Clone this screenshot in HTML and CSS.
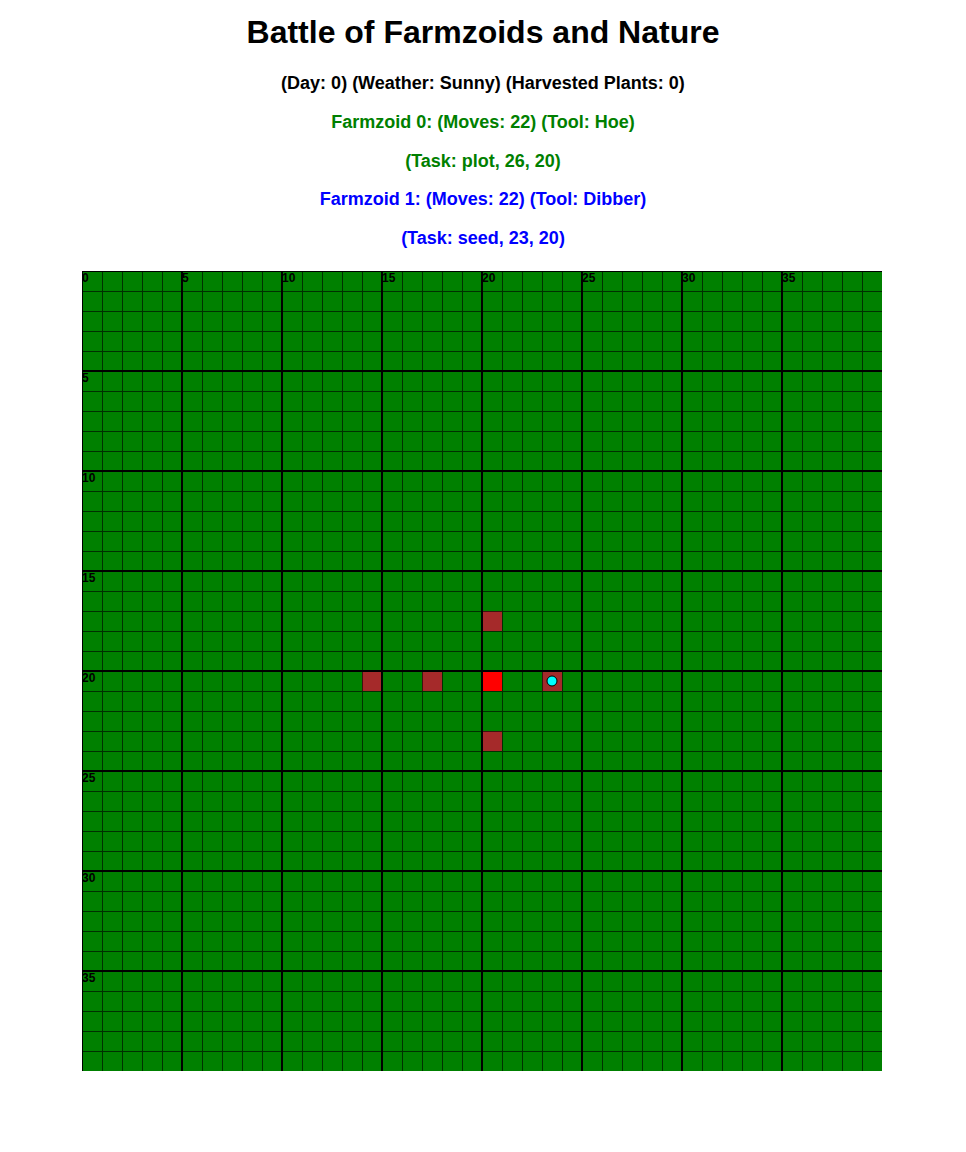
FILE: index.html
```html
<!DOCTYPE html>
<html lang="en">
<head>
<meta charset="utf-8">
<title>Battle of Farmzoids and Nature</title>
<link rel="stylesheet" href="styles.css">
</head>
<body>
<header class="status">
  <h1 class="title">Battle of Farmzoids and Nature</h1>
  <p class="line">(Day: 0) (Weather: Sunny) (Harvested Plants: 0)</p>
  <p class="line zoid-0">Farmzoid 0: (Moves: 22) (Tool: Hoe)</p>
  <p class="line zoid-0">(Task: plot, 26, 20)</p>
  <p class="line zoid-1">Farmzoid 1: (Moves: 22) (Tool: Dibber)</p>
  <p class="line zoid-1">(Task: seed, 23, 20)</p>
</header>
<div class="board-wrap">
  <svg class="board" width="800" height="800" viewBox="0 0 800 800" xmlns="http://www.w3.org/2000/svg">
    <defs>
      <pattern id="cell" width="20" height="20" patternUnits="userSpaceOnUse">
        <path d="M0 0H20V1H1V20H0Z" class="thin"/>
      </pattern>
    </defs>
    <rect class="field" x="0" y="0" width="800" height="800"/>
    <g class="plots">
      <rect class="plot" x="400" y="340" width="20" height="20"/>
      <rect class="plot" x="280" y="400" width="20" height="20"/>
      <rect class="plot" x="340" y="400" width="20" height="20"/>
      <rect class="target" x="400" y="400" width="20" height="20"/>
      <rect class="plot" x="460" y="400" width="20" height="20"/>
      <rect class="plot" x="400" y="460" width="20" height="20"/>
    </g>
    <rect x="0" y="0" width="800" height="800" fill="url(#cell)"/>
    <g class="thick">
      <rect x="0" y="0" width="1" height="800"/>
      <rect x="99" y="0" width="2" height="800"/>
      <rect x="199" y="0" width="2" height="800"/>
      <rect x="299" y="0" width="2" height="800"/>
      <rect x="399" y="0" width="2" height="800"/>
      <rect x="499" y="0" width="2" height="800"/>
      <rect x="599" y="0" width="2" height="800"/>
      <rect x="699" y="0" width="2" height="800"/>
      <rect x="0" y="0" width="800" height="1"/>
      <rect x="0" y="99" width="800" height="2"/>
      <rect x="0" y="199" width="800" height="2"/>
      <rect x="0" y="299" width="800" height="2"/>
      <rect x="0" y="399" width="800" height="2"/>
      <rect x="0" y="499" width="800" height="2"/>
      <rect x="0" y="599" width="800" height="2"/>
      <rect x="0" y="699" width="800" height="2"/>
    </g>
    <g class="labels">
      <text x="0" y="10.9">0</text>
      <text x="100" y="10.9">5</text>
      <text x="200" y="10.9">10</text>
      <text x="300" y="10.9">15</text>
      <text x="400" y="10.9">20</text>
      <text x="500" y="10.9">25</text>
      <text x="600" y="10.9">30</text>
      <text x="700" y="10.9">35</text>
      <text x="0" y="110.9">5</text>
      <text x="0" y="210.9">10</text>
      <text x="0" y="310.9">15</text>
      <text x="0" y="410.9">20</text>
      <text x="0" y="510.9">25</text>
      <text x="0" y="610.9">30</text>
      <text x="0" y="710.9">35</text>
    </g>
    <circle class="zoid" cx="470" cy="410" r="5"/>
  </svg>
</div>
</body>
</html>
```

FILE: styles.css
```css
html, body {
  margin: 0;
  padding: 0;
  background: #ffffff;
}

body {
  font-family: "Liberation Sans", Arial, sans-serif;
  color: #000000;
  height: 1152px;
}

.status {
  display: flex;
  flex-direction: column;
  align-items: center;
  padding-top: 14px;
}

.title {
  font-size: 32px;
  font-weight: bold;
  line-height: 37px;
  margin: 0 0 22px 0;
}

.line {
  font-size: 18px;
  font-weight: bold;
  line-height: 20.75px;
  margin: 0 0 18px 0;
}

.line:last-child {
  margin-bottom: 0;
}

.zoid-0 {
  color: #008000;
}

.zoid-1 {
  color: #0000ff;
}

.board-wrap {
  display: flex;
  justify-content: center;
  padding-right: 2px;
  margin-top: 22.25px;
}

.board {
  display: block;
}

.field {
  fill: #008000;
}

.plot {
  fill: #a52a2a;
}

.target {
  fill: #ff0000;
}

.thin {
  fill: rgba(0, 0, 0, 0.62);
}

.thick rect {
  fill: #000000;
}

.labels text {
  font-family: "Liberation Sans", Arial, sans-serif;
  font-size: 12px;
  font-weight: bold;
  fill: #000000;
}

.zoid {
  fill: #00ffff;
  stroke: #000000;
  stroke-width: 1;
}
```
